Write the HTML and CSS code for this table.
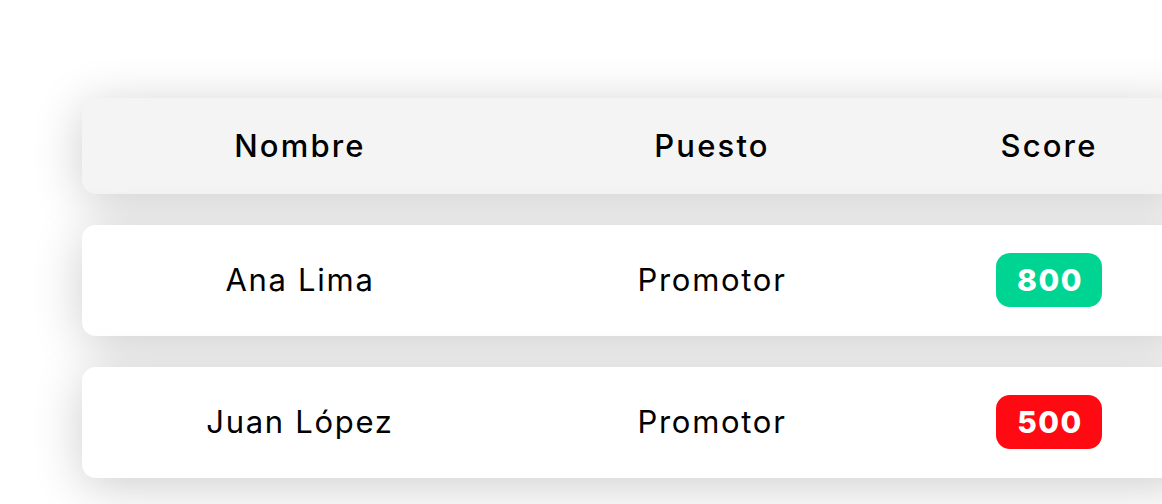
FILE: index.html
```html
<!DOCTYPE html>
<html lang="es">
<head>
<meta charset="utf-8">
<title>Ranking</title>
<link rel="stylesheet" href="styles.css">
</head>
<body>
<main class="page">
  <div class="table">
    <div class="row head">
      <div class="cell">Nombre</div>
      <div class="cell">Puesto</div>
      <div class="cell">Score</div>
    </div>
    <div class="row">
      <div class="cell">Ana Lima</div>
      <div class="cell">Promotor</div>
      <div class="cell"><span class="badge good">800</span></div>
    </div>
    <div class="row">
      <div class="cell">Juan López</div>
      <div class="cell">Promotor</div>
      <div class="cell"><span class="badge bad">500</span></div>
    </div>
  </div>
</main>
</body>
</html>
```
FILE: styles.css
```css
html {
  overflow: hidden;
}
html, body {
  margin: 0;
  padding: 0;
  background: #fff;
}
body {
  font-family: "Inter", "Noto Sans", sans-serif;
  color: #000;
}
.page {
  box-sizing: border-box;
  height: 504px;
  padding: 98px 0 0 82px;
}
.table {
  width: 1110px;
  display: flex;
  flex-direction: column;
  gap: 31px;
}
.row {
  display: grid;
  grid-template-columns: 436px 388px 1fr;
  align-items: center;
  justify-items: center;
  background: #fff;
  border-radius: 14px;
  box-shadow: 0 8px 50px rgba(0, 0, 0, 0.2);
  padding: 28px 0 29px;
  font-size: 31px;
  line-height: 36px;
  font-weight: 400;
  letter-spacing: 0.055em;
}
.row.head {
  background: #f4f4f4;
  padding: 30px 0;
  font-weight: 500;
  letter-spacing: 0.07em;
}
.cell {
  text-align: center;
}
.badge {
  display: inline-block;
  padding: 9px 19px 9px 21px;
  border-radius: 14px;
  color: #fff;
  font-weight: 800;
  line-height: 36px;
  font-size: 30px;
  letter-spacing: 0.05em;
}
.badge.good {
  background: #00d492;
}
.badge.bad {
  background: #ff0a12;
}
```
